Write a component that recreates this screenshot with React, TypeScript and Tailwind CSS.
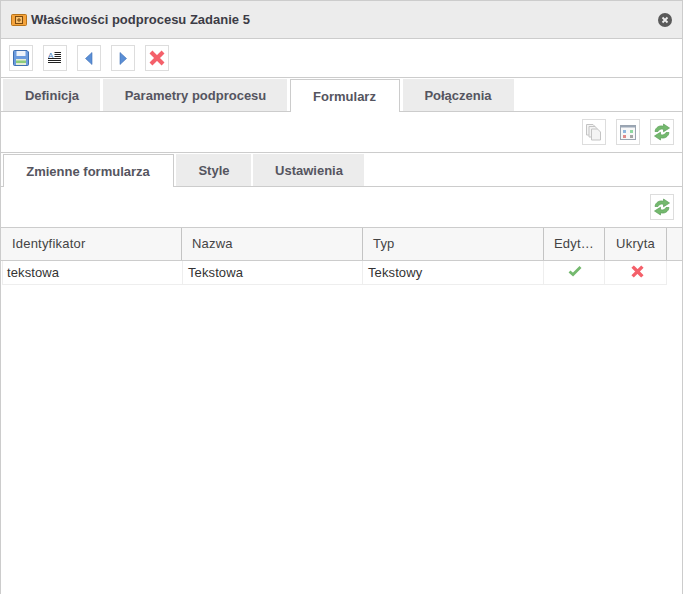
const Btn = ({ children }: { children: React.ReactNode }) => (
  <div className="w-[24px] h-[26px] border border-[#dddddd] bg-white flex items-center justify-center shrink-0">{children}</div>
);

const Refresh = () => (
  <svg width="18" height="18" viewBox="0 0 18 18">
    <path d="M2 8.5 C2.5 4 7 2 10.5 3.3 L10.5 1 L16.5 5 L10.5 8.8 L10.5 6.3 C7.5 5.6 6 6.5 5 8.5 Z" fill="#74b96e" stroke="#5a9f58" strokeWidth="0.7" />
    <path d="M16 9.5 C15.5 14 11 16 7.5 14.7 L7.5 17 L1.5 13 L7.5 9.2 L7.5 11.7 C10.5 12.4 12 11.5 13 9.5 Z" fill="#74b96e" stroke="#5a9f58" strokeWidth="0.7" />
  </svg>
);

const XIcon = ({ size = 14 }: { size?: number }) => (
  <svg width={size} height={size} viewBox="0 0 14 14">
    <path d="M3 3 L11 11 M11 3 L3 11" stroke="#f4606a" strokeWidth="3.6" strokeLinecap="square" />
  </svg>
);

const Tab = ({ label, w, active, h, nudge = true }: { label: string; w: string; active?: boolean; h: string; nudge?: boolean }) => (
  <div
    className={`${w} ${h} shrink-0 flex items-center justify-center pt-[1px] text-[13px] font-bold text-[#555560] ${nudge ? "pl-[1px]" : "pr-[1px]"} ${
      active ? "bg-white border border-[#cccccc] border-b-0 relative z-10 -mb-px" : "bg-[#ececec]"
    }`}
  >
    {label}
  </div>
);

const HeadCell = ({ label, w, center, pad = "pl-[10px]" }: { label: string; w: string; center?: boolean; pad?: string }) => (
  <div className={`${w} h-full shrink-0 border-r border-[#c4c4c4] flex items-center text-[13px] tracking-[0.2px] text-[#444444] ${center ? "justify-center" : pad}`}>
    {label}
  </div>
);

const Cell = ({ children, w, center }: { children: React.ReactNode; w: string; center?: boolean }) => (
  <div className={`${w} h-full shrink-0 border-r border-[#eeeeee] flex items-center text-[13px] tracking-[0.1px] text-[#333333] ${center ? "justify-center" : "pl-[5px]"}`}>
    {children}
  </div>
);

export default function App() {
  return (
    <div className="w-[684px] h-[594px] bg-white overflow-hidden" style={{ fontFamily: '"Liberation Sans", Arial, sans-serif' }}>
      <div className="w-[683px] h-[594px] border-l border-r border-t border-[#cccccc] flex flex-col">
        <div className="h-[38px] shrink-0 bg-[#ececec] border-b border-[#cccccc] flex items-center pl-[10px] pr-[10px]">
          <svg width="16" height="12" viewBox="0 0 16 12" className="shrink-0 mt-[1px]">
            <rect x="0.5" y="0.5" width="15" height="11" rx="1" fill="#f5a33b" stroke="#b8741a" />
            <rect x="4.5" y="2.5" width="7" height="7" fill="#f9c06c" stroke="#7a4a10" />
            <path d="M8 4 V8 M6 6 H10" stroke="#7a4a10" />
          </svg>
          <div className="ml-[4px] text-[13px] font-bold text-[#3c3c46] flex-1">Właściwości podprocesu Zadanie 5</div>
          <svg width="14" height="14" viewBox="0 0 14 14">
            <circle cx="7" cy="7" r="7" fill="#5a5a5a" />
            <path d="M4.5 4.5 L9.5 9.5 M9.5 4.5 L4.5 9.5" stroke="#eeeeee" strokeWidth="1.8" />
          </svg>
        </div>

        <div className="h-[39px] shrink-0 border-b border-[#cccccc] flex items-center gap-[10px] pl-[8px]">
          <Btn>
            <svg width="16" height="16" viewBox="0 0 16 16">
              <path d="M0.5 1.5 Q0.5 0.5 1.5 0.5 H14 L15.5 2 V14.5 Q15.5 15.5 14.5 15.5 H1.5 Q0.5 15.5 0.5 14.5 Z" fill="#6b9bde" stroke="#3f6fb0" />
              <rect x="3.5" y="1" width="9" height="5" fill="#eef3fa" />
              <rect x="3" y="9" width="10" height="6" fill="#e6ecd8" />
              <rect x="3" y="10.5" width="10" height="2.5" fill="#8ccc7c" />
            </svg>
          </Btn>
          <Btn>
            <svg width="14" height="14" viewBox="0 0 14 14">
              <text x="0" y="7" fontSize="8" fill="#4a7fc0" fontFamily="Liberation Sans">A</text>
              <path d="M6.5 1.5 H13 M6.5 3.5 H13 M6.5 5.5 H13 M0 7.5 H13 M0 9.5 H13 M0 11.5 H13" stroke="#222222" strokeWidth="1" />
            </svg>
          </Btn>
          <Btn>
            <svg width="8" height="13" viewBox="0 0 8 13">
              <path d="M7 0.5 V12.5 L0.5 6.5 Z" fill="#5b8fd6" stroke="#3e6fb5" strokeWidth="0.6" />
            </svg>
          </Btn>
          <Btn>
            <svg width="8" height="13" viewBox="0 0 8 13">
              <path d="M1 0.5 V12.5 L7.5 6.5 Z" fill="#5b8fd6" stroke="#3e6fb5" strokeWidth="0.6" />
            </svg>
          </Btn>
          <Btn><XIcon size={16} /></Btn>
        </div>

        <div className="h-[34px] shrink-0 border-b border-[#cccccc] flex items-end gap-[3px] pl-[2px]">
          <Tab label="Definicja" w="w-[97px]" h="h-[32px]" />
          <Tab label="Parametry podprocesu" w="w-[184px]" h="h-[32px]" />
          <Tab label="Formularz" w="w-[110px]" h="h-[33px]" active nudge={false} />
          <Tab label="Połączenia" w="w-[111px]" h="h-[32px]" nudge={false} />
        </div>

        <div className="h-[41px] shrink-0 border-b border-[#cccccc] flex items-center justify-end gap-[10px] pr-[8px]">
          <Btn>
            <svg width="18" height="18" viewBox="0 0 18 18" fill="#f4f4f4" stroke="#c4c4c4">
              <path d="M1.5 1.5 H8 L10 3.5 V12 H1.5 Z" />
              <path d="M4 3.5 H10 L12 5.5 V14 H4 Z" />
              <path d="M6.5 6 H12.5 L15.5 9 V17 H6.5 Z" />
            </svg>
          </Btn>
          <Btn>
            <svg width="16" height="15" viewBox="0 0 16 15">
              <rect x="0.5" y="0.5" width="15" height="14" fill="#f8f8f8" stroke="#9aa4b0" />
              <rect x="1" y="1" width="14" height="1.5" fill="#9aa6b5" />
              <rect x="3" y="5" width="3" height="3" fill="#8fb6de" />
              <rect x="10" y="5" width="3" height="3" fill="#8fd8a0" />
              <rect x="3" y="10" width="3" height="3" fill="#e08a8a" />
              <rect x="10" y="10" width="3" height="3" fill="#a5a5a5" />
            </svg>
          </Btn>
          <Btn><Refresh /></Btn>
        </div>

        <div className="h-[34px] shrink-0 border-b border-[#cccccc] flex items-end gap-[2px] pl-[2px]">
          <Tab label="Zmienne formularza" w="w-[171px]" h="h-[33px]" active nudge={false} />
          <Tab label="Style" w="w-[75px]" h="h-[32px]" />
          <Tab label="Ustawienia" w="w-[111px]" h="h-[32px]" />
        </div>

        <div className="h-[41px] shrink-0 border-b border-[#cccccc] flex items-center justify-end pr-[8px]">
          <Btn><Refresh /></Btn>
        </div>

        <div className="h-[33px] shrink-0 bg-[#f7f7f7] border-b border-[#cccccc] flex">
          <HeadCell label="Identyfikator" w="w-[181px]" pad="pl-[11px]" />
          <HeadCell label="Nazwa" w="w-[181px]" />
          <HeadCell label="Typ" w="w-[181px]" />
          <HeadCell label="Edyt…" w="w-[61px]" center />
          <HeadCell label="Ukryta" w="w-[62px]" center />
        </div>

        <div className="h-[24px] ml-[1px] w-[665px] shrink-0 border-b border-[#eeeeee] border-l flex">
          <Cell w="w-[180px]"><span className="-ml-[1px]">tekstowa</span></Cell>
          <Cell w="w-[180px]">Tekstowa</Cell>
          <Cell w="w-[181px]">Tekstowy</Cell>
          <Cell w="w-[61px]" center>
            <svg width="14" height="12" viewBox="0 0 14 12" className="-mt-[3px] ml-[2px]">
              <path d="M1.5 6.5 L5 9.5 L12.5 2" fill="none" stroke="#74b96e" strokeWidth="2.8" />
            </svg>
          </Cell>
          <Cell w="w-[62px]" center><span className="-mt-[3px] ml-[3px] flex"><XIcon size={13} /></span></Cell>
        </div>
      </div>
    </div>
  );
}
